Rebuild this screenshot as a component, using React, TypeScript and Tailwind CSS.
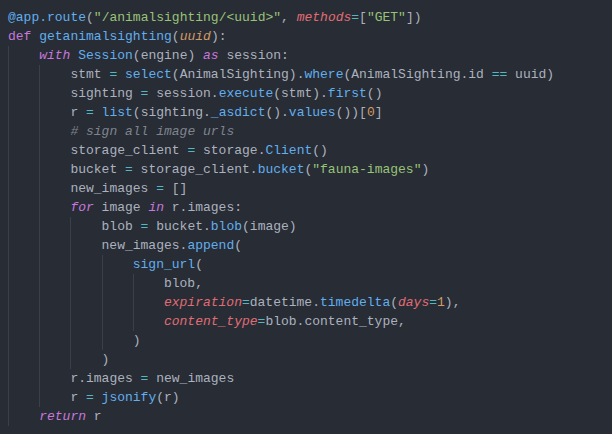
import React from 'react';

// token styles (One Dark palette)
const T = 'text-[#abb2bf]';
const FN = 'text-[#61afef]';
const STR = 'text-[#98c379]';
const OP = 'text-[#56b6c2]';
const NUM = 'text-[#d19a66]';
const KW = 'text-[#c678dd]';
const KWI = 'text-[#c678dd] italic';
const ARG = 'text-[#e06c75] italic';
const PARAM = 'text-[#d19a66] italic';
const CMT = 'text-[#7f848e] italic';

type Tok = [string, string];
type Line = { indent: number; toks: Tok[] };

const lines: Line[] = [
  { indent: 0, toks: [['@app.route', FN], ['(', T], ['"/animalsighting/<uuid>"', STR], [', ', T], ['methods', ARG], ['=', OP], ['[', T], ['"GET"', STR], ['])', T]] },
  { indent: 0, toks: [['def', KW], [' ', T], ['getanimalsighting', FN], ['(', T], ['uuid', PARAM], ['):', T]] },
  { indent: 1, toks: [['with', KWI], [' ', T], ['Session', FN], ['(engine) ', T], ['as', KWI], [' session:', T]] },
  { indent: 2, toks: [['stmt ', T], ['=', OP], [' ', T], ['select', FN], ['(AnimalSighting).', T], ['where', FN], ['(AnimalSighting.id ', T], ['==', OP], [' uuid)', T]] },
  { indent: 2, toks: [['sighting ', T], ['=', OP], [' session.', T], ['execute', FN], ['(stmt).', T], ['first', FN], ['()', T]] },
  { indent: 2, toks: [['r ', T], ['=', OP], [' ', T], ['list', FN], ['(sighting.', T], ['_asdict', FN], ['().', T], ['values', FN], ['())[', T], ['0', NUM], [']', T]] },
  { indent: 2, toks: [['# sign all image urls', CMT]] },
  { indent: 2, toks: [['storage_client ', T], ['=', OP], [' storage.', T], ['Client', FN], ['()', T]] },
  { indent: 2, toks: [['bucket ', T], ['=', OP], [' storage_client.', T], ['bucket', FN], ['(', T], ['"fauna-images"', STR], [')', T]] },
  { indent: 2, toks: [['new_images ', T], ['=', OP], [' []', T]] },
  { indent: 2, toks: [['for', KWI], [' image ', T], ['in', KWI], [' r.images:', T]] },
  { indent: 3, toks: [['blob ', T], ['=', OP], [' bucket.', T], ['blob', FN], ['(image)', T]] },
  { indent: 3, toks: [['new_images.', T], ['append', FN], ['(', T]] },
  { indent: 4, toks: [['sign_url', FN], ['(', T]] },
  { indent: 5, toks: [['blob,', T]] },
  { indent: 5, toks: [['expiration', ARG], ['=', OP], ['datetime.', T], ['timedelta', FN], ['(', T], ['days', ARG], ['=', OP], ['1', NUM], ['),', T]] },
  { indent: 5, toks: [['content_type', ARG], ['=', OP], ['blob.content_type,', T]] },
  { indent: 4, toks: [[')', T]] },
  { indent: 3, toks: [[')', T]] },
  { indent: 2, toks: [['r.images ', T], ['=', OP], [' new_images', T]] },
  { indent: 2, toks: [['r ', T], ['=', OP], [' ', T], ['jsonify', FN], ['(r)', T]] },
  { indent: 1, toks: [['return', KWI], [' r', T]] },
];

export default function App() {
  return (
    <div className="h-screen w-full bg-[#282c34] pt-[8px] pl-[8px] font-['Liberation_Mono',monospace] text-[13px] leading-[19px]">
      {lines.map((line, i) => (
        <div key={i} className="flex h-[19px] whitespace-pre">
          {/* indent guides, one per level */}
          {Array.from({ length: line.indent }).map((_, j) => (
            <span key={j} className="inline-block h-[19px] w-[31.2px] shrink-0 border-l border-[#3b4048]" />
          ))}
          <span>
            {line.toks.map(([text, cls], k) => (
              <span key={k} className={cls}>
                {text}
              </span>
            ))}
          </span>
        </div>
      ))}
    </div>
  );
}
